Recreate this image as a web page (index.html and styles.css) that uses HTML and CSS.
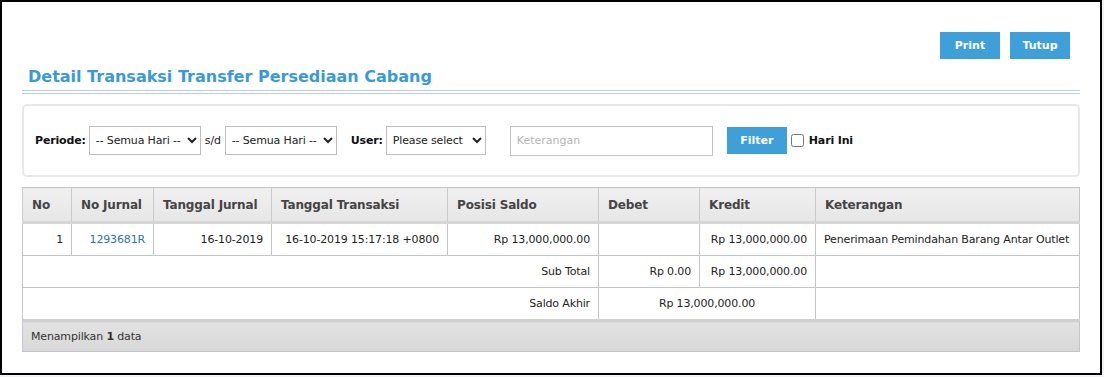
FILE: index.html
```html
<!DOCTYPE html>
<html lang="id">
<head>
  <meta charset="UTF-8">
  <title>Detail Transaksi Transfer Persediaan Cabang</title>
  <link rel="stylesheet" href="styles.css">
</head>
<body>
  <div class="frame">
    <!-- Top buttons -->
    <div class="toolbar">
      <button class="btn">Print</button>
      <button class="btn">Tutup</button>
    </div>

    <h1 class="title">Detail Transaksi Transfer Persediaan Cabang</h1>
    <div class="rule"></div>

    <!-- Filter panel -->
    <div class="filter-box">
      <label class="lbl">Periode:</label>
      <select class="sel sel-day">
        <option>-- Semua Hari --</option>
      </select>
      <span class="sd">s/d</span>
      <select class="sel sel-day">
        <option>-- Semua Hari --</option>
      </select>
      <label class="lbl lbl-user">User:</label>
      <select class="sel sel-user">
        <option>Please select</option>
      </select>
      <input type="text" class="ket" placeholder="Keterangan">
      <button class="btn btn-filter">Filter</button>
      <label class="today"><input type="checkbox"> Hari Ini</label>
    </div>

    <!-- Data table -->
    <table class="grid">
      <colgroup>
        <col style="width:49px">
        <col style="width:82px">
        <col style="width:118px">
        <col style="width:176px">
        <col style="width:151px">
        <col style="width:101px">
        <col style="width:116px">
        <col>
      </colgroup>
      <thead>
        <tr>
          <th>No</th>
          <th>No Jurnal</th>
          <th>Tanggal Jurnal</th>
          <th>Tanggal Transaksi</th>
          <th>Posisi Saldo</th>
          <th>Debet</th>
          <th>Kredit</th>
          <th>Keterangan</th>
        </tr>
      </thead>
      <tbody>
        <tr>
          <td class="r">1</td>
          <td class="r"><a href="#" class="link">1293681R</a></td>
          <td class="r">16-10-2019</td>
          <td class="r">16-10-2019 15:17:18 +0800</td>
          <td class="r">Rp 13,000,000.00</td>
          <td class="r"></td>
          <td class="r">Rp 13,000,000.00</td>
          <td>Penerimaan Pemindahan Barang Antar Outlet</td>
        </tr>
        <tr>
          <td class="r" colspan="5">Sub Total</td>
          <td class="r">Rp 0.00</td>
          <td class="r">Rp 13,000,000.00</td>
          <td></td>
        </tr>
        <tr>
          <td class="r" colspan="5">Saldo Akhir</td>
          <td class="c" colspan="2">Rp 13,000,000.00</td>
          <td></td>
        </tr>
      </tbody>
      <tfoot>
        <tr>
          <td colspan="8">Menampilkan <b>1</b> data</td>
        </tr>
      </tfoot>
    </table>
  </div>
</body>
</html>
```

FILE: styles.css
```css
/* Base */
body {
  margin: 0;
  padding: 0;
  background-color: #f0f0f5;
  font-family: "DejaVu Sans", Verdana, sans-serif;
  font-size: 11px;
  letter-spacing: -0.15px;
  color: #222;
}

.frame {
  width: 1102px;
  height: 375px;
  box-sizing: border-box;
  border: 2px solid #000;
  background-color: #fff;
  padding: 30px 20px 0 20px;
}

/* Buttons */
.toolbar {
  display: flex;
  justify-content: flex-end;
  gap: 10px;
  padding-right: 10px;
}

.btn {
  width: 60px;
  height: 27px;
  border: none;
  background-color: #3f9fd8;
  color: #fff;
  font-family: "DejaVu Sans", Verdana, sans-serif;
  font-weight: bold;
  font-size: 11px;
  padding: 0;
  cursor: pointer;
}

/* Title */
.title {
  margin: 7px 0 0 0;
  padding-left: 6px;
  font-size: 16px;
  line-height: 22px;
  color: #3a9ad9;
  letter-spacing: 0;
}

.rule {
  margin-top: 2px;
  height: 2px;
  border-top: 1px solid #b6cfe4;
  border-bottom: 1px solid #b6cfe4;
}

/* Filter panel */
.filter-box {
  margin-top: 10px;
  height: 69px;
  border: 2px solid #e8e8e8;
  border-radius: 5px;
  display: flex;
  align-items: center;
  padding-left: 11px;
}

.lbl {
  font-weight: bold;
  font-size: 11px;
  color: #111;
  margin-right: 3px;
}

.lbl-user {
  margin-left: 14px;
}

.sel {
  height: 29px;
  border: 1px solid #bdbdbd;
  border-radius: 0;
  background-color: #fff;
  font-family: "DejaVu Sans", Verdana, sans-serif;
  font-size: 11px;
  letter-spacing: -0.15px;
  color: #222;
  padding: 0 0 0 2px;
}

.sel-day {
  width: 112px;
}

.sel-user {
  width: 100px;
}

.sd {
  margin: 0 4px;
}

.ket {
  margin-left: 24px;
  width: 203px;
  height: 30px;
  box-sizing: border-box;
  border: 1px solid #c3c3c3;
  padding: 0 6px;
  font-family: "DejaVu Sans", Verdana, sans-serif;
  font-size: 11px;
}

.ket::placeholder {
  color: #b5b5b5;
}

.btn-filter {
  margin-left: 14px;
}

.today {
  display: flex;
  align-items: center;
  font-weight: bold;
  color: #111;
}

.today input {
  margin: 0 5px 0 4px;
}

/* Table */
.grid {
  margin-top: 10px;
  width: 1058px;
  border-collapse: collapse;
  table-layout: fixed;
  border: 1px solid #c2c6ca;
}

.grid th {
  height: 33px;
  text-align: left;
  padding: 0 9px;
  font-size: 12px;
  color: #444;
  background: linear-gradient(#f0f0f0, #e6e6e6);
  border-left: 1px solid #c8cbce;
  border-bottom: 3px solid #d6d6d6;
  white-space: nowrap;
}

.grid td {
  height: 31px;
  padding: 0 8px;
  border: 1px solid #c2c6ca;
  white-space: nowrap;
}

.grid td.r {
  text-align: right;
}

.grid td.c {
  text-align: center;
}

.link {
  color: #2a73a8;
  text-decoration: none;
}

.grid tfoot td {
  height: 29px;
  padding-left: 8px;
  background: linear-gradient(#e2e2e2, #d8d8d8);
  border-top: 3px solid #d0d0d0;
  color: #333;
}
```
